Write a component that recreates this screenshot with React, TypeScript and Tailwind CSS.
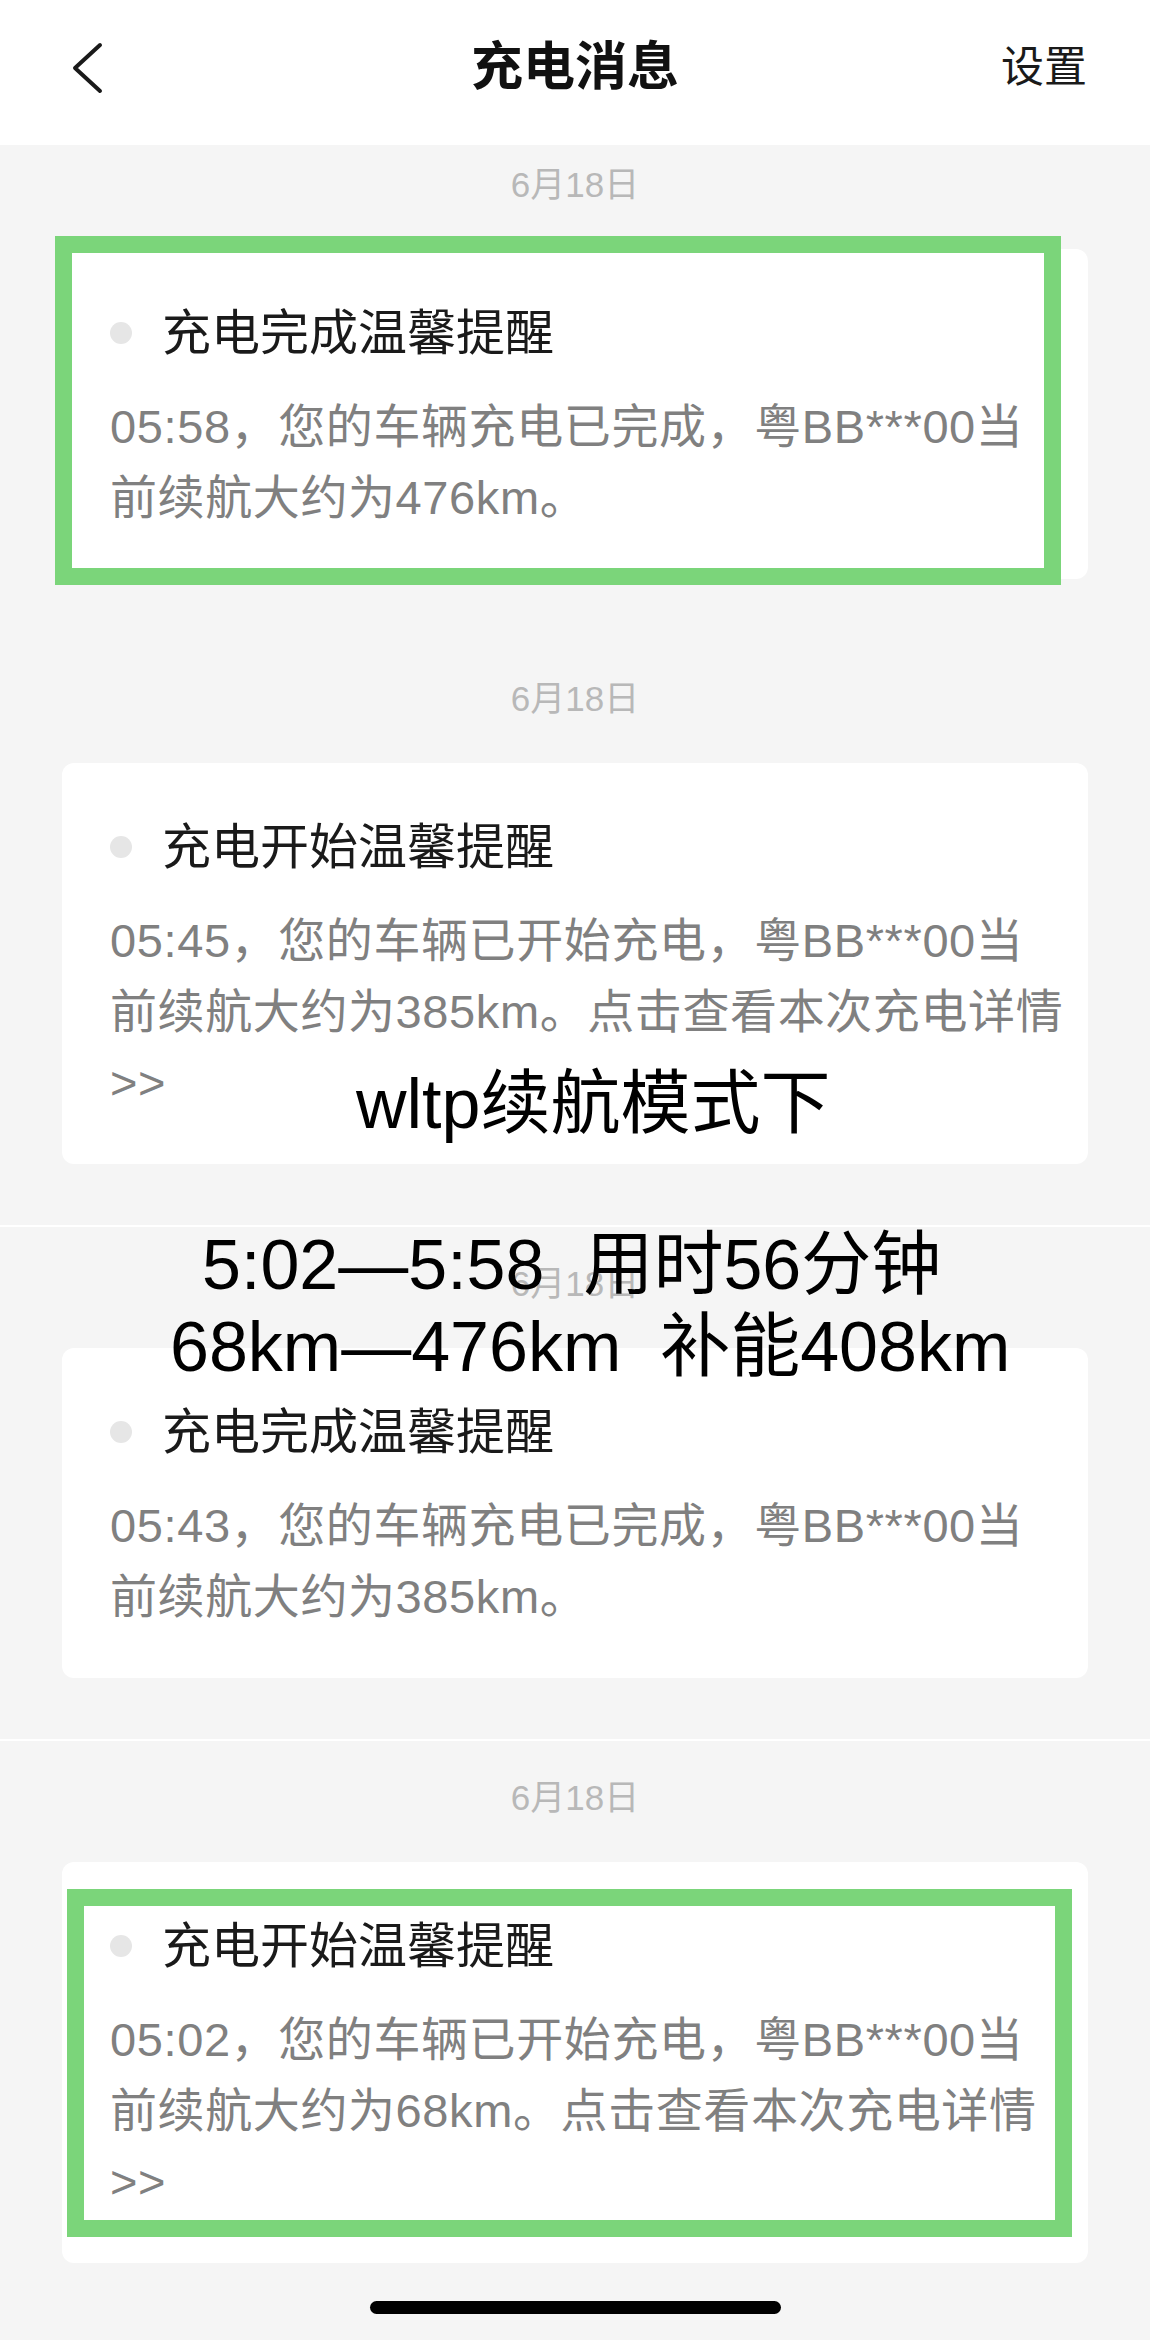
const font = "font-['Liberation_Sans','Noto_Sans_CJK_SC',sans-serif]";

type Msg = {
  date: string;
  title: string;
  lines: string[];
  divider?: boolean;
  highlight?: "outside" | "inside";
};

const messages: Msg[] = [
  {
    date: "6月18日",
    title: "充电完成温馨提醒",
    lines: ["05:58，您的车辆充电已完成，粤BB***00当", "前续航大约为476km。"],
    highlight: "outside",
  },
  {
    date: "6月18日",
    title: "充电开始温馨提醒",
    lines: ["05:45，您的车辆已开始充电，粤BB***00当", "前续航大约为385km。点击查看本次充电详情", ">>"],
  },
  {
    date: "6月18日",
    title: "充电完成温馨提醒",
    lines: ["05:43，您的车辆充电已完成，粤BB***00当", "前续航大约为385km。"],
    divider: true,
  },
  {
    date: "6月18日",
    title: "充电开始温馨提醒",
    lines: ["05:02，您的车辆已开始充电，粤BB***00当", "前续航大约为68km。点击查看本次充电详情", ">>"],
    divider: true,
    highlight: "inside",
  },
];

const BackIcon = () => (
  <svg width="32" height="52" viewBox="0 0 32 52" fill="none">
    <path d="M28 3 L3 26 L28 49" stroke="#1a1a1a" strokeWidth="4" strokeLinecap="round" strokeLinejoin="round" />
  </svg>
);

const MessageCard = ({ msg }: { msg: Msg }) => (
  <div className="relative rounded-[12px] bg-white pl-[48px] pr-[20px] pt-[48px] pb-[46px]">
    <div className="flex h-[72px] items-center">
      <span className="h-[22px] w-[22px] shrink-0 rounded-full bg-[#e6e6e6]" />
      <span className="ml-[30px] text-[49px] leading-[72px] text-[#1a1a1a]">{msg.title}</span>
    </div>
    <div className="mt-[22px] text-[47px] leading-[71px] tracking-[0.6px] text-[#808080]">
      {msg.lines.map((line, i) => (
        <div key={i} className="whitespace-nowrap">
          {line}
        </div>
      ))}
    </div>

    {msg.highlight === "outside" && (
      <div className="absolute left-[-7px] top-[-13px] h-[349px] w-[1006px] border-[17px] border-[#7bd57a]" />
    )}
    {msg.highlight === "inside" && (
      <div className="absolute left-[5px] top-[27px] h-[348px] w-[1005px] border-[17px] border-[#7bd57a]" />
    )}
  </div>
);

export default function App() {
  return (
    <div className={`relative min-h-[2340px] w-[1150px] bg-[#f5f5f5] ${font}`}>
      {/* Header */}
      <header className="h-[145px] bg-white">
        <div className="grid h-[134px] grid-cols-[1fr_auto_1fr] items-center">
          <div className="pl-[72px] pt-[2px]">
            <BackIcon />
          </div>
          <h1 className="text-[52px] font-bold leading-none text-[#111]">充电消息</h1>
          <div className="pr-[63px] text-right text-[43px] leading-none text-[#1a1a1a]">设置</div>
        </div>
      </header>

      {/* Message list */}
      <div className="px-[62px]">
        {messages.map((msg, i) => (
          <section key={i}>
            {msg.divider ? (
              <>
                <div className="mx-[-62px] mt-[61px] h-[2px] bg-white" />
                <div className="pt-[37px]" />
              </>
            ) : (
              <div className={i === 0 ? "pt-[20px]" : "pt-[100px]"} />
            )}
            <div className="flex h-[40px] items-center justify-center text-[35px] text-[#b8b8b8]">{msg.date}</div>
            <div className="mt-[44px]">
              <MessageCard msg={msg} />
            </div>
          </section>
        ))}
      </div>

      {/* Home indicator */}
      <div className="mt-[38px] flex justify-center pb-[24px]">
        <div className="h-[13px] w-[411px] rounded-full bg-black" />
      </div>

      {/* Annotation overlays */}
      <div className="absolute left-[356px] top-[1069px] whitespace-pre text-[70px] leading-[70px] text-black">
        wltp续航模式下
      </div>
      <div className="absolute left-[202px] top-[1230px] whitespace-pre text-[70px] leading-[70px] text-black">
        5:02—5:58  用时56分钟
      </div>
      <div className="absolute left-[170px] top-[1312px] whitespace-pre text-[70px] leading-[70px] text-black">
        68km—476km  补能408km
      </div>
    </div>
  );
}
